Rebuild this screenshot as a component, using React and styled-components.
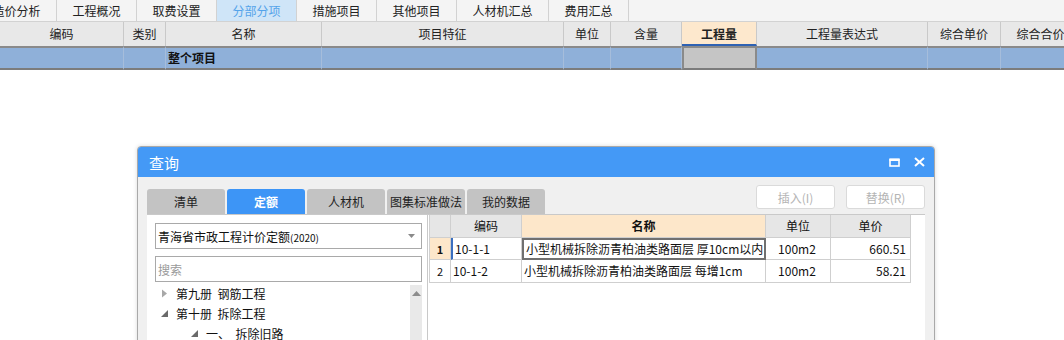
import styled, { createGlobalStyle } from 'styled-components';

const FONT = '"Noto Sans CJK SC", "Liberation Sans", sans-serif';

const topTabs = [
  { label: '造价分析', width: 80 },
  { label: '工程概况', width: 80 },
  { label: '取费设置', width: 80 },
  { label: '分部分项', width: 80, active: true },
  { label: '措施项目', width: 80 },
  { label: '其他项目', width: 80 },
  { label: '人材机汇总', width: 92 },
  { label: '费用汇总', width: 80 },
];

const columns = [
  { title: '编码', width: 124 },
  { title: '类别', width: 42 },
  { title: '名称', width: 156 },
  { title: '项目特征', width: 242 },
  { title: '单位', width: 47 },
  { title: '含量', width: 71 },
  { title: '工程量', width: 75, focus: true },
  { title: '工程量表达式', width: 171 },
  { title: '综合单价', width: 73 },
  { title: '综合合价', width: 80 },
];

const dialogTabs = ['清单', '定额', '人材机', '图集标准做法', '我的数据'];

const quotaRows = [
  { no: 1, code: '10-1-1', name: '小型机械拆除沥青柏油类路面层 厚10cm以内', unit: '100m2', price: '660.51' },
  { no: 2, code: '10-1-2', name: '小型机械拆除沥青柏油类路面层 每增1cm', unit: '100m2', price: '58.21' },
];

const treeItems = [
  { label: '第九册  钢筋工程', level: 0, open: false },
  { label: '第十册  拆除工程', level: 0, open: true },
  { label: '一、  拆除旧路', level: 1, open: true },
];

const gridCols = columns.map((c) => `${c.width}px`).join(' ');

const App = () => {
  return (
    <Page>
      <GlobalStyle />
      <TopBar>
        {topTabs.map((t) => (
          <TopTab key={t.label} $width={t.width} $active={t.active}>
            {t.label}
          </TopTab>
        ))}
      </TopBar>

      <MainGrid>
        {columns.map((c) => (
          <HeadCell key={c.title} $focus={c.focus}>
            {c.title}
          </HeadCell>
        ))}
        {columns.map((c, i) => (
          <ProjectCell key={c.title} $focus={c.focus}>
            {i === 2 ? '整个项目' : ''}
          </ProjectCell>
        ))}
      </MainGrid>

      <Dialog>
        <TitleBar>
          <span>查询</span>
          <WindowButtons>
            <svg width="11" height="9" viewBox="0 0 11 9">
              <rect x="1" y="1.5" width="9" height="6.5" fill="none" stroke="#fff" strokeWidth="1.6" />
              <rect x="0.5" y="0.5" width="10" height="2.5" fill="#fff" />
            </svg>
            <svg width="11" height="10" viewBox="0 0 11 10">
              <path d="M1 1 L10 9 M10 1 L1 9" stroke="#fff" strokeWidth="2" />
            </svg>
          </WindowButtons>
        </TitleBar>

        <DialogBody>
          <ToolRow>
            <DialogTabs>
              {dialogTabs.map((t) => (
                <DialogTab key={t} $active={t === '定额'}>
                  {t}
                </DialogTab>
              ))}
            </DialogTabs>
            <Actions>
              <ActionButton disabled>插入(I)</ActionButton>
              <ActionButton disabled>替换(R)</ActionButton>
            </Actions>
          </ToolRow>

          <Content>
            <LeftPanel>
              <Select>
                <span>
                  青海省市政工程计价定额<Small>(2020)</Small>
                </span>
                <svg width="7" height="4" viewBox="0 0 7 4">
                  <path d="M0 0 L7 0 L3.5 4 Z" fill="#8a8a8a" />
                </svg>
              </Select>
              <Search placeholder="搜索" />
              <TreeArea>
                <TreeList>
                  {treeItems.map((item) => (
                    <TreeRow key={item.label} $level={item.level}>
                      {item.open ? (
                        <svg width="7" height="7" viewBox="0 0 7 7">
                          <path d="M7 0 L7 7 L0 7 Z" fill="#6a6a6a" />
                        </svg>
                      ) : (
                        <svg width="7" height="9" viewBox="0 0 7 9">
                          <path d="M1 0.5 L6 4.5 L1 8.5 Z" fill="#a8a8a8" />
                        </svg>
                      )}
                      <span>{item.label}</span>
                    </TreeRow>
                  ))}
                </TreeList>
                <ScrollTrack>
                  <svg width="9" height="5" viewBox="0 0 9 5">
                    <path d="M0 5 L4.5 0 L9 5 Z" fill="#8c8c8c" />
                  </svg>
                </ScrollTrack>
              </TreeArea>
            </LeftPanel>

            <RightPanel>
              <QuotaGrid>
                <QHead />
                <QHead>编码</QHead>
                <QHead $focus>名称</QHead>
                <QHead>单位</QHead>
                <QHead>单价</QHead>
                {quotaRows.map((r) => (
                  <QuotaRow key={r.no} r={r} selected={r.no === 1} />
                ))}
              </QuotaGrid>
            </RightPanel>
          </Content>
        </DialogBody>
      </Dialog>
    </Page>
  );
};

const QuotaRow = ({ r, selected }) => (
  <>
    <RowNo $selected={selected}>{r.no}</RowNo>
    <QCell $current={selected}>{r.code}</QCell>
    <QCell $outlined={selected}>{r.name}</QCell>
    <QCell $align="center">{r.unit}</QCell>
    <QCell $align="right">{r.price}</QCell>
  </>
);

// STYLED COMPONENTS

const GlobalStyle = createGlobalStyle`
  body {
    margin: 0;
    background: #fff;
    font-family: ${FONT};
  }
`;

const Page = styled.div`
  position: relative;
  width: 1064px;
  height: 340px;
  overflow: hidden;
  background: #fff;
`;

const TopBar = styled.div`
  display: flex;
  height: 21px;
  margin-left: -23px;
  background: #f4f4f4;
  border-bottom: 1px solid #d2d2d2;
`;

const TopTab = styled.div`
  flex: none;
  width: ${(p) => p.$width}px;
  box-sizing: border-box;
  border-right: 1px solid #d2d2d2;
  background: ${(p) => (p.$active ? '#cfe5f8' : 'transparent')};
  color: ${(p) => (p.$active ? '#54a3ea' : '#222')};
  font-size: 12px;
  line-height: 21px;
  text-align: center;
`;

const MainGrid = styled.div`
  display: grid;
  grid-template-columns: ${gridCols};
  grid-template-rows: 24px 24px;
`;

const HeadCell = styled.div`
  box-sizing: border-box;
  border-right: 1px solid #c9c9c9;
  border-bottom: ${(p) => (p.$focus ? '2px solid #2f62b3' : '0')};
  background: ${(p) => (p.$focus ? '#fde8cd' : '#e8e8e8')};
  color: #222;
  font-size: 12px;
  font-weight: ${(p) => (p.$focus ? 700 : 400)};
  line-height: 23px;
  text-align: center;
  white-space: nowrap;
`;

const ProjectCell = styled.div`
  box-sizing: border-box;
  border-top: 2px solid #8a8a8a;
  border-bottom: 2px solid #7c7c7c;
  border-right: 1px solid #a6bddb;
  border-left: ${(p) => (p.$focus ? '2px solid #8a8a8a' : '0')};
  ${(p) => p.$focus && 'border-right: 2px solid #8a8a8a;'}
  background: ${(p) => (p.$focus ? '#c5c5c5' : '#8fb0d9')};
  color: #111;
  font-size: 12px;
  font-weight: 700;
  line-height: 20px;
  padding-left: 2px;
  white-space: nowrap;
`;

const Dialog = styled.div`
  position: absolute;
  left: 137px;
  top: 146px;
  width: 798px;
  height: 260px;
  box-sizing: border-box;
  display: flex;
  flex-direction: column;
  border: 1px solid #a9a9a9;
  border-radius: 4px 4px 0 0;
  background: #f0f0f0;
  box-shadow: 0 0 4px rgba(0, 0, 0, 0.15);
  overflow: hidden;
`;

const TitleBar = styled.div`
  display: flex;
  align-items: center;
  justify-content: space-between;
  height: 30px;
  padding: 0 9px 0 11px;
  background: #4499f6;
  color: #fff;
  font-size: 15px;
`;

const WindowButtons = styled.div`
  display: flex;
  align-items: center;
  gap: 14px;
`;

const DialogBody = styled.div`
  display: flex;
  flex-direction: column;
  flex: 1;
  padding: 0 9px 0 9px;
`;

const ToolRow = styled.div`
  display: flex;
  justify-content: space-between;
  align-items: flex-end;
  height: 37px;
`;

const DialogTabs = styled.div`
  display: flex;
  gap: 2px;
`;

const DialogTab = styled.div`
  width: 78px;
  height: 25px;
  border-radius: 3px 3px 0 0;
  background: ${(p) => (p.$active ? '#3d95f6' : '#c3c3c3')};
  color: ${(p) => (p.$active ? '#fff' : '#222')};
  font-size: 12px;
  font-weight: ${(p) => (p.$active ? 700 : 400)};
  line-height: 25px;
  text-align: center;
  white-space: nowrap;
`;

const Actions = styled.div`
  display: flex;
  gap: 11px;
  align-self: flex-start;
  margin-top: 8px;
`;

const ActionButton = styled.button`
  width: 79px;
  height: 24px;
  padding: 0;
  border: 1px solid #dadada;
  border-radius: 3px;
  background: #fff;
  color: #b4b4b4;
  font-family: ${FONT};
  font-size: 12px;
`;

const Content = styled.div`
  display: flex;
  flex: 1;
  border-top: 1px solid #c9c9c9;
  background: #fff;
`;

const LeftPanel = styled.div`
  display: flex;
  flex-direction: column;
  gap: 7px;
  width: 281px;
  box-sizing: border-box;
  padding: 8px 5px 0 8px;
  border-right: 1px solid #c9c9c9;
`;

const Select = styled.div`
  display: flex;
  align-items: center;
  justify-content: space-between;
  height: 26px;
  box-sizing: border-box;
  padding: 0 6px 0 2px;
  border: 1px solid #a9a9a9;
  color: #111;
  font-size: 12px;
  white-space: nowrap;
`;

const Small = styled.span`
  font-size: 10px;
`;

const Search = styled.input`
  height: 26px;
  box-sizing: border-box;
  padding: 0 2px;
  border: 1px solid #a9a9a9;
  outline: none;
  font-family: ${FONT};
  font-size: 12px;

  &::placeholder {
    color: #9a9a9a;
  }
`;

const TreeArea = styled.div`
  display: flex;
  margin-top: -4px;
`;

const TreeList = styled.div`
  flex: 1;
  margin-top: -2px;
`;

const TreeRow = styled.div`
  display: flex;
  align-items: center;
  height: 20px;
  padding-left: ${(p) => 6 + p.$level * 30}px;
  gap: 8px;
  color: #111;
  font-size: 12px;
  white-space: pre;
`;

const ScrollTrack = styled.div`
  display: flex;
  justify-content: center;
  width: 12px;
  height: 60px;
  padding-top: 6px;
  box-sizing: border-box;
  background: #e9e9e9;
`;

const RightPanel = styled.div`
  flex: 1;
  padding-left: 1px;
`;

const QuotaGrid = styled.div`
  display: grid;
  grid-template-columns: 21px 71px 244px 65px 80px;
  grid-template-rows: 23px 22px 23px;
  width: 481px;
  border-left: 1px solid #d0d0d0;
`;

const QHead = styled.div`
  box-sizing: border-box;
  border-right: 1px solid #cfcfcf;
  border-bottom: 1px solid #cfcfcf;
  background: ${(p) => (p.$focus ? '#fde7ca' : '#e6e6e6')};
  color: #111;
  font-size: 12px;
  font-weight: ${(p) => (p.$focus ? 700 : 400)};
  line-height: 22px;
  text-align: center;
`;

const RowNo = styled.div`
  box-sizing: border-box;
  border-right: 1px solid #cfcfcf;
  border-bottom: 1px solid #cfcfcf;
  background: ${(p) => (p.$selected ? '#fde7ca' : '#fff')};
  color: #111;
  font-size: 11px;
  font-weight: ${(p) => (p.$selected ? 700 : 400)};
  line-height: 22px;
  text-align: center;
`;

const QCell = styled.div`
  box-sizing: border-box;
  border-right: 1px solid #cfcfcf;
  border-bottom: 1px solid #cfcfcf;
  ${(p) => p.$current && 'border-left: 2px solid #3a6fc0;'}
  ${(p) => p.$outlined && 'border: 2px solid #707070;'}
  padding: 0 4px 0 2px;
  color: #111;
  font-size: 12px;
  line-height: ${(p) => (p.$outlined ? '18px' : '21px')};
  text-align: ${(p) => p.$align || 'left'};
  white-space: nowrap;
  overflow: hidden;
`;

export default App;
